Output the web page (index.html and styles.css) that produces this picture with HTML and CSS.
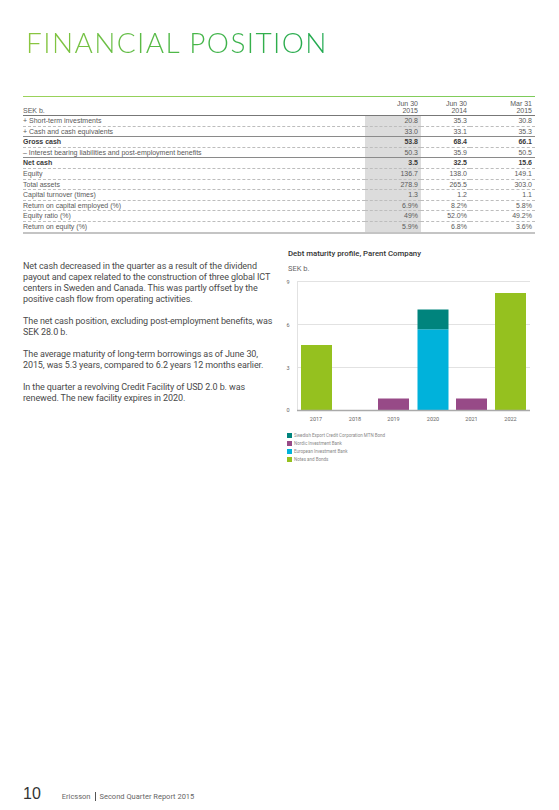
FILE: index.html
```html
<!DOCTYPE html>
<html lang="en">
<head>
<meta charset="utf-8">
<title>Financial position</title>
<link rel="stylesheet" href="styles.css">
</head>
<body>
<div class="page">
  <h1 class="title">FINANCIAL POSITION</h1>
  <div class="rule"></div>
  <table class="fin">
    <thead>
      <tr><th class="lbl">SEK b.</th><th class="c1">Jun 30<br>2015</th><th class="c2">Jun 30<br>2014</th><th class="c3">Mar 31<br>2015</th></tr>
    </thead>
    <tbody>
      <tr class="dash"><td class="lbl">+ Short-term investments</td><td class="c1">20.8</td><td class="c2">35.3</td><td class="c3">30.8</td></tr>
      <tr class="solid"><td class="lbl">+ Cash and cash equivalents</td><td class="c1">33.0</td><td class="c2">33.1</td><td class="c3">35.3</td></tr>
      <tr class="dash bold"><td class="lbl">Gross cash</td><td class="c1">53.8</td><td class="c2">68.4</td><td class="c3">66.1</td></tr>
      <tr class="solid"><td class="lbl">– Interest bearing liabilities and post-employment benefits</td><td class="c1">50.3</td><td class="c2">35.9</td><td class="c3">50.5</td></tr>
      <tr class="dash bold"><td class="lbl">Net cash</td><td class="c1">3.5</td><td class="c2">32.5</td><td class="c3">15.6</td></tr>
      <tr class="dash"><td class="lbl">Equity</td><td class="c1">136.7</td><td class="c2">138.0</td><td class="c3">149.1</td></tr>
      <tr class="dash"><td class="lbl">Total assets</td><td class="c1">278.9</td><td class="c2">265.5</td><td class="c3">303.0</td></tr>
      <tr class="dash"><td class="lbl">Capital turnover (times)</td><td class="c1">1.3</td><td class="c2">1.2</td><td class="c3">1.1</td></tr>
      <tr class="dash"><td class="lbl">Return on capital employed (%)</td><td class="c1">6.9%</td><td class="c2">8.2%</td><td class="c3">5.8%</td></tr>
      <tr class="dash"><td class="lbl">Equity ratio (%)</td><td class="c1">49%</td><td class="c2">52.0%</td><td class="c3">49.2%</td></tr>
      <tr class="last"><td class="lbl">Return on equity (%)</td><td class="c1">5.9%</td><td class="c2">6.8%</td><td class="c3">3.6%</td></tr>
    </tbody>
  </table>

  <div class="cols">
    <div class="text">
      <p>Net cash decreased in the quarter as a result of the dividend payout and capex related to the construction of three global ICT centers in Sweden and Canada. This was partly offset by the positive cash flow from operating activities.</p>
      <p>The net cash position, excluding post-employment benefits, was SEK 28.0 b.</p>
      <p>The average maturity of long-term borrowings as of June 30, 2015, was 5.3 years, compared to 6.2 years 12 months earlier.</p>
      <p>In the quarter a revolving Credit Facility of USD 2.0 b. was renewed. The new facility expires in 2020.</p>
    </div>
    <div class="chart">
      <div class="chart-title">Debt maturity profile, Parent Company</div>
      <div class="chart-unit">SEK b.</div>
      <svg class="plot" width="250" height="150" viewBox="0 0 250 150">
        <g class="grid">
          <line x1="12" y1="6.5" x2="245" y2="6.5"/>
          <line x1="12" y1="49.5" x2="245" y2="49.5"/>
          <line x1="12" y1="92.5" x2="245" y2="92.5"/>
          <line x1="12.5" y1="6" x2="12.5" y2="135"/>
        </g>
        <g class="ylab">
          <text x="3" y="8.5">9</text>
          <text x="3" y="51.5">6</text>
          <text x="3" y="94.5">3</text>
          <text x="3" y="137">0</text>
        </g>
        <rect class="nb" x="16" y="70" width="31" height="65"/>
        <rect class="nib" x="93" y="123.5" width="31" height="11.5"/>
        <rect class="eib" x="132.5" y="54.3" width="31" height="80.7"/>
        <rect class="sek" x="132.5" y="34.5" width="31" height="19.8"/>
        <rect class="nib" x="171" y="123.5" width="31" height="11.5"/>
        <rect class="nb" x="210" y="18" width="31" height="117"/>
        <line class="base" x1="12" y1="135.5" x2="245" y2="135.5"/>
        <g class="xlab">
          <text x="31" y="145.5">2017</text>
          <text x="70" y="145.5">2018</text>
          <text x="108.5" y="145.5">2019</text>
          <text x="148" y="145.5">2020</text>
          <text x="186.5" y="145.5">2021</text>
          <text x="225.5" y="145.5">2022</text>
        </g>
      </svg>
      <ul class="legend">
        <li><span class="sw sw-sek"></span>Swedish Export Credit Corporation MTN Bond</li>
        <li><span class="sw sw-nib"></span>Nordic Investment Bank</li>
        <li><span class="sw sw-eib"></span>European Investment Bank</li>
        <li><span class="sw sw-nb"></span>Notes and Bonds</li>
      </ul>
    </div>
  </div>

  <footer class="foot">
    <span class="pno">10</span>
    <span class="brand">Ericsson</span>
    <span class="sep"></span>
    <span class="report">Second Quarter Report 2015</span>
  </footer>
</div>
</body>
</html>
```
FILE: styles.css
```css
* { box-sizing: border-box; }
html, body { margin: 0; padding: 0; background: #fff; }
body { font-family: Roboto, "Liberation Sans", sans-serif; color: #444; }

.page {
  width: 559px;
  height: 810px;
  padding: 28px 0 8px 23px;
  display: flex;
  flex-direction: column;
}

.title {
  margin: 0 0 40px 3px;
  font-family: Lato, "Open Sans", sans-serif;
  font-weight: 300;
  font-size: 28px;
  line-height: 28px;
  letter-spacing: 1.4px;
  align-self: flex-start;
  background: linear-gradient(90deg, #8cc63f 0%, #4db848 50%, #1ea84f 100%);
  -webkit-background-clip: text;
  background-clip: text;
  color: transparent;
}

.rule {
  width: 512px;
  height: 1px;
  background: linear-gradient(90deg, #9bd25a, #7ccb5a);
}

.fin {
  width: 512px;
  border-collapse: collapse;
  font-family: "Liberation Sans", Arial, sans-serif;
  font-size: 7px;
  color: #5a5a5a;
}
.fin th, .fin td { padding: 0 3px 0 0; text-align: right; white-space: nowrap; }
.fin th {
  font-weight: normal;
  line-height: 7px;
  padding-top: 3px;
  padding-bottom: 1px;
  vertical-align: bottom;
  border-bottom: 1px solid #777;
}
.fin td { line-height: 9.6px; height: 10.6px; }
.fin .lbl { text-align: left; padding-left: 0; }
.fin .c1 { width: 56px; background: #dcdcdc; }
.fin th.c1 { background: transparent; }
.fin .c2 { width: 49px; }
.fin .c3 { width: 65px; }
.fin tr.dash td { border-bottom: 1px dashed #bdbdbd; }
.fin tr.solid td { border-bottom: 1px solid #8a8a8a; }
.fin tr.last td { border-bottom: 2px solid #c4c4c4; }
.fin tr.bold td { font-weight: bold; color: #3a3a3a; }

.cols {
  display: flex;
  margin-top: 14px;
}
.text {
  width: 252px;
  padding-top: 13px;
  font-size: 9px;
  line-height: 11px;
  letter-spacing: -0.1px;
  color: #4a4a4a;
}
.text p { margin: 0 0 11px 0; }

.chart { margin-left: 10px; width: 250px; }
.chart-title {
  margin-left: 3px;
  padding-top: 1px;
  font-size: 7.8px;
  font-weight: 500;
  line-height: 10px;
  color: #333;
}
.chart-unit {
  margin: 5px 0 0 3px;
  font-size: 7.5px;
  line-height: 10px;
  color: #666;
}
.plot { display: block; margin-top: 1px; overflow: visible; }
.plot .grid line { stroke: #e2e2e2; stroke-width: 1; }
.plot .base { stroke: #aaaaaa; stroke-width: 1.5; }
.plot text { font-family: Roboto, "Liberation Sans", sans-serif; font-size: 5.5px; fill: #666; text-anchor: middle; }
.plot .nb { fill: #95c11f; }
.plot .nib { fill: #974a87; }
.plot .eib { fill: #00b2db; }
.plot .sek { fill: #00847d; }

.legend {
  list-style: none;
  margin: 7px 0 0 2px;
  padding: 0;
  font-size: 4.5px;
  line-height: 8px;
  color: #888;
}
.legend li { display: flex; align-items: center; height: 8px; }
.sw { width: 5px; height: 5px; margin-right: 2px; flex: none; }
.sw-sek { background: #00847d; }
.sw-nib { background: #974a87; }
.sw-eib { background: #00b2db; }
.sw-nb { background: #95c11f; }

.foot {
  margin-top: auto;
  display: flex;
  align-items: baseline;
  color: #333;
}
.pno {
  font-family: "Liberation Sans", Arial, sans-serif;
  font-size: 16px;
  line-height: 16px;
  margin-right: 21px;
}
.brand, .report {
  font-size: 7.5px;
  color: #666;
}
.sep {
  width: 1px;
  height: 9px;
  background: #555;
  margin: 0 4px;
  align-self: center;
  position: relative;
  top: 2px;
}
```
